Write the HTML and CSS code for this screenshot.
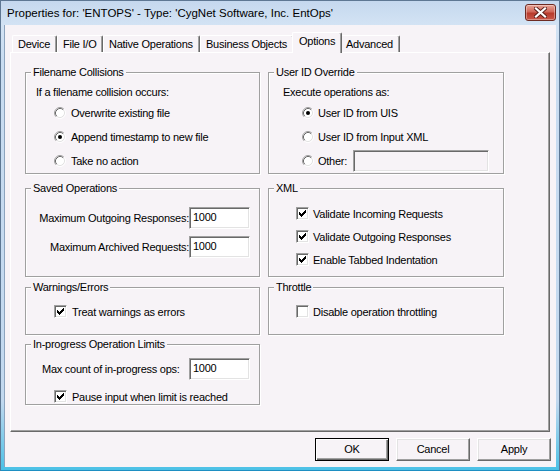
FILE: index.html
```html
<!DOCTYPE html>
<html>
<head>
<meta charset="utf-8">
<link rel="stylesheet" href="styles.css">
</head>
<body>
<div class="window">
  <div class="titlebar">
    <span class="title">Properties for: 'ENTOPS' - Type: 'CygNet Software, Inc. EntOps'</span>
    <span class="close">
      <svg width="13" height="11" viewBox="0 0 13 11"><path d="M2 1.5 L11 9.5 M11 1.5 L2 9.5" stroke="#5a1f1a" stroke-width="4" stroke-linecap="square"/><path d="M2 1.5 L11 9.5 M11 1.5 L2 9.5" stroke="#fff" stroke-width="2.2" stroke-linecap="square"/></svg>
    </span>
  </div>
  <div class="client">
    <div class="tabs">
      <div class="tab t-device">Device</div>
      <div class="tab t-file">File I/O</div>
      <div class="tab t-native">Native Operations</div>
      <div class="tab t-business">Business Objects</div>
      <div class="tab active t-options">Options</div>
      <div class="tab t-advanced">Advanced</div>
    </div>
    <div class="panel">
      <div class="col">
        <fieldset class="group g-file">
          <legend>Filename Collisions</legend>
          <div class="line lead-file">If a filename collision occurs:</div>
          <div class="options opts-file">
            <div class="opt"><span class="radio"><svg width="12" height="12" viewBox="0 0 12 12"><circle cx="6" cy="6" r="4.5" fill="#fff"/><path d="M2.11 9.89 A5.5 5.5 0 0 1 9.89 2.11" fill="none" stroke="#a0a0a0"/><path d="M9.89 2.11 A5.5 5.5 0 0 1 2.11 9.89" fill="none" stroke="#fff"/><path d="M2.82 9.18 A4.5 4.5 0 0 1 9.18 2.82" fill="none" stroke="#696969"/><path d="M9.18 2.82 A4.5 4.5 0 0 1 2.82 9.18" fill="none" stroke="#e3e3e3"/></svg></span>Overwrite existing file</div>
            <div class="opt"><span class="radio"><svg width="12" height="12" viewBox="0 0 12 12"><circle cx="6" cy="6" r="4.5" fill="#fff"/><path d="M2.11 9.89 A5.5 5.5 0 0 1 9.89 2.11" fill="none" stroke="#a0a0a0"/><path d="M9.89 2.11 A5.5 5.5 0 0 1 2.11 9.89" fill="none" stroke="#fff"/><path d="M2.82 9.18 A4.5 4.5 0 0 1 9.18 2.82" fill="none" stroke="#696969"/><path d="M9.18 2.82 A4.5 4.5 0 0 1 2.82 9.18" fill="none" stroke="#e3e3e3"/><circle cx="6" cy="6" r="2" fill="#000"/></svg></span>Append timestamp to new file</div>
            <div class="opt"><span class="radio"><svg width="12" height="12" viewBox="0 0 12 12"><circle cx="6" cy="6" r="4.5" fill="#fff"/><path d="M2.11 9.89 A5.5 5.5 0 0 1 9.89 2.11" fill="none" stroke="#a0a0a0"/><path d="M9.89 2.11 A5.5 5.5 0 0 1 2.11 9.89" fill="none" stroke="#fff"/><path d="M2.82 9.18 A4.5 4.5 0 0 1 9.18 2.82" fill="none" stroke="#696969"/><path d="M9.18 2.82 A4.5 4.5 0 0 1 2.82 9.18" fill="none" stroke="#e3e3e3"/></svg></span>Take no action</div>
          </div>
        </fieldset>
        <fieldset class="group g-saved">
          <legend>Saved Operations</legend>
          <div class="field-row"><span>Maximum Outgoing Responses:</span><span class="input num">1000</span></div>
          <div class="field-row second"><span>Maximum Archived Requests:</span><span class="input num">1000</span></div>
        </fieldset>
        <fieldset class="group g-warn">
          <legend>Warnings/Errors</legend>
          <div class="check-row cb-left"><span class="check"><svg width="9" height="9" viewBox="0 0 9 9"><path d="M1 3 V6 H2 V7 H3 V8 H4 V7 H5 V6 H6 V5 H7 V4 H8 V1 H7 V2 H6 V3 H5 V4 H4 V5 H3 V4 H2 V3 Z" fill="#000"/></svg></span>Treat warnings as errors</div>
        </fieldset>
        <fieldset class="group g-prog">
          <legend>In-progress Operation Limits</legend>
          <div class="count-row"><span>Max count of in-progress ops:</span><span class="input num">1000</span></div>
          <div class="check-row cb-left pause"><span class="check"><svg width="9" height="9" viewBox="0 0 9 9"><path d="M1 3 V6 H2 V7 H3 V8 H4 V7 H5 V6 H6 V5 H7 V4 H8 V1 H7 V2 H6 V3 H5 V4 H4 V5 H3 V4 H2 V3 Z" fill="#000"/></svg></span>Pause input when limit is reached</div>
        </fieldset>
      </div>
      <div class="col">
        <fieldset class="group g-user">
          <legend>User ID Override</legend>
          <div class="line lead-user">Execute operations as:</div>
          <div class="options opts-user">
            <div class="opt"><span class="radio"><svg width="12" height="12" viewBox="0 0 12 12"><circle cx="6" cy="6" r="4.5" fill="#fff"/><path d="M2.11 9.89 A5.5 5.5 0 0 1 9.89 2.11" fill="none" stroke="#a0a0a0"/><path d="M9.89 2.11 A5.5 5.5 0 0 1 2.11 9.89" fill="none" stroke="#fff"/><path d="M2.82 9.18 A4.5 4.5 0 0 1 9.18 2.82" fill="none" stroke="#696969"/><path d="M9.18 2.82 A4.5 4.5 0 0 1 2.82 9.18" fill="none" stroke="#e3e3e3"/><circle cx="6" cy="6" r="2" fill="#000"/></svg></span>User ID from UIS</div>
            <div class="opt"><span class="radio"><svg width="12" height="12" viewBox="0 0 12 12"><circle cx="6" cy="6" r="4.5" fill="#fff"/><path d="M2.11 9.89 A5.5 5.5 0 0 1 9.89 2.11" fill="none" stroke="#a0a0a0"/><path d="M9.89 2.11 A5.5 5.5 0 0 1 2.11 9.89" fill="none" stroke="#fff"/><path d="M2.82 9.18 A4.5 4.5 0 0 1 9.18 2.82" fill="none" stroke="#696969"/><path d="M9.18 2.82 A4.5 4.5 0 0 1 2.82 9.18" fill="none" stroke="#e3e3e3"/></svg></span>User ID from Input XML</div>
            <div class="opt"><span class="radio"><svg width="12" height="12" viewBox="0 0 12 12"><circle cx="6" cy="6" r="4.5" fill="#fff"/><path d="M2.11 9.89 A5.5 5.5 0 0 1 9.89 2.11" fill="none" stroke="#a0a0a0"/><path d="M9.89 2.11 A5.5 5.5 0 0 1 2.11 9.89" fill="none" stroke="#fff"/><path d="M2.82 9.18 A4.5 4.5 0 0 1 9.18 2.82" fill="none" stroke="#696969"/><path d="M9.18 2.82 A4.5 4.5 0 0 1 2.82 9.18" fill="none" stroke="#e3e3e3"/></svg></span>Other:<span class="input other"></span></div>
          </div>
        </fieldset>
        <fieldset class="group g-xml">
          <legend>XML</legend>
          <div class="check-row cb-right"><span class="check"><svg width="9" height="9" viewBox="0 0 9 9"><path d="M1 3 V6 H2 V7 H3 V8 H4 V7 H5 V6 H6 V5 H7 V4 H8 V1 H7 V2 H6 V3 H5 V4 H4 V5 H3 V4 H2 V3 Z" fill="#000"/></svg></span>Validate Incoming Requests</div>
          <div class="check-row cb-right"><span class="check"><svg width="9" height="9" viewBox="0 0 9 9"><path d="M1 3 V6 H2 V7 H3 V8 H4 V7 H5 V6 H6 V5 H7 V4 H8 V1 H7 V2 H6 V3 H5 V4 H4 V5 H3 V4 H2 V3 Z" fill="#000"/></svg></span>Validate Outgoing Responses</div>
          <div class="check-row cb-right"><span class="check"><svg width="9" height="9" viewBox="0 0 9 9"><path d="M1 3 V6 H2 V7 H3 V8 H4 V7 H5 V6 H6 V5 H7 V4 H8 V1 H7 V2 H6 V3 H5 V4 H4 V5 H3 V4 H2 V3 Z" fill="#000"/></svg></span>Enable Tabbed Indentation</div>
        </fieldset>
        <fieldset class="group g-throttle">
          <legend>Throttle</legend>
          <div class="check-row cb-right"><span class="check"></span>Disable operation throttling</div>
        </fieldset>
      </div>
    </div>
    <div class="buttons">
      <div class="btn default">OK</div>
      <div class="btn">Cancel</div>
      <div class="btn">Apply</div>
    </div>
  </div>
</div>
</body>
</html>
```

FILE: styles.css
```css
* { box-sizing: border-box; }
html, body { margin: 0; padding: 0; background: #f7f3f7; }
body { width: 560px; height: 471px; overflow: hidden; font-family: "Liberation Sans", Arial, sans-serif; font-size: 11px; letter-spacing: -0.25px; color: #000; }

.window {
  width: 560px; height: 471px;
  border: 1px solid #5e7793;
  border-bottom-color: #1e8fc2;
  background: linear-gradient(#c5d8ee 0px, #d3e3f4 24px, #c9dcf1 60px, #c2d8ef 400px, #48c0e6 471px);
  display: flex; flex-direction: column;
}
.titlebar { height: 24px; display: flex; align-items: flex-start; flex: none; }
.title { padding-left: 6px; line-height: 25px; font-size: 11.5px; letter-spacing: 0; color: #000; white-space: nowrap; }
.close {
  margin-left: auto; margin-right: 3px; margin-top: 3px;
  width: 31px; height: 17px; border-radius: 3px;
  border: 1px solid #6d2a22;
  background: linear-gradient(#e8a496 0%, #d0685a 45%, #b83b2c 55%, #c9584a 100%);
  display: flex; align-items: center; justify-content: center;
  box-shadow: inset 0 0 0 1px rgba(255,255,255,0.35);
}
.client {
  flex: 1; margin: 0 3px 3px 3px;
  background: #f7f3f7;
  border-left: 1px solid #8da4be;
  display: flex; flex-direction: column;
}

.tabs { display: flex; align-items: flex-end; height: 20px; margin-top: 7px; margin-left: 7px; position: relative; z-index: 1; }
.tab {
  height: 17px; padding: 0 0 0 5px; line-height: 16px;
  border-top: 1px solid #fff; border-left: 1px solid #fff; border-right: 1px solid #696969;
  border-radius: 2px 2px 0 0;
  box-shadow: inset -1px 0 #a0a0a0;
  background: #f7f3f7; white-space: nowrap;
}
.t-device { width: 45px; }
.t-file { width: 46px; }
.t-native { width: 97px; }
.t-business { width: 94px; }
.t-options { width: 50px; }
.t-advanced { width: 60px; }
.tab.active { height: 21px; margin: 0 -2px -1px -2px; line-height: 17px; padding-left: 6px; padding-bottom: 3px; z-index: 2; position: relative; }

.panel {
  margin-left: 5px; width: 540px; height: 380px;
  border-top: 1px solid #fff; border-left: 1px solid #fff;
  border-right: 1px solid #696969; border-bottom: 1px solid #696969;
  box-shadow: inset -1px -1px #a0a0a0;
  padding: 13px 0 0 14px;
  display: flex; gap: 8px; align-items: flex-start;
}
.col { display: flex; flex-direction: column; }
.col:first-child { width: 235px; }
.col:last-child { width: 236px; }

.group {
  margin: 0; padding: 0; min-width: 0;
  border: 1px solid #a0a0a0;
  box-shadow: 1px 1px 0 #fff, inset 1px 1px 0 #fff;
  display: flex; flex-direction: column;
}
.group legend {
  margin-left: 5px; padding: 0 2px; line-height: 13px; height: 13px;
  background: #f7f3f7;
}
.g-file, .g-user { height: 108px; }
.g-saved, .g-xml { height: 95px; margin-top: 8px; }
.g-warn, .g-throttle { height: 54px; margin-top: 4px; }
.g-prog { height: 67px; margin-top: 3px; }

.line { line-height: 13px; height: 13px; }
.lead-file { margin-top: 7px; padding-left: 10px; }
.lead-user { margin-top: 7px; padding-left: 14px; }
.options { display: flex; flex-direction: column; }
.opts-file { margin-top: 2px; padding-left: 28px; }
.opts-user { margin-top: 2px; padding-left: 33px; }
.opt { height: 24px; display: flex; align-items: center; white-space: nowrap; }
.radio { width: 12px; height: 12px; margin-right: 5px; display: flex; }
.opts-user .radio { margin-right: 4px; }
.input {
  background: #fff;
  border-top: 1px solid #a0a0a0; border-left: 1px solid #a0a0a0;
  border-bottom: 1px solid #fff; border-right: 1px solid #fff;
  box-shadow: inset 1px 1px #696969, inset -1px -1px #e3e3e3;
}
.input.num { width: 61px; height: 22px; padding: 3px 0 0 3px; line-height: 13px; }
.input.other { width: 136px; height: 22px; margin-left: 6px; background: #f7f3f7; }

.field-row { display: flex; justify-content: flex-end; align-items: center; padding-right: 9px; margin-top: 12px; white-space: nowrap; }
.field-row.second { margin-top: 7px; }
.count-row { display: flex; align-items: center; padding: 0 9px 0 16px; margin-top: 7px; white-space: nowrap; }
.count-row .input { margin-left: auto; }

.check-row { height: 23px; display: flex; align-items: center; white-space: nowrap; }
.cb-left { padding-left: 28px; }
.cb-right { padding-left: 27px; }
.g-xml .check-row:first-of-type { margin-top: 7px; }
.g-warn .check-row, .g-throttle .check-row { margin-top: 6px; }
.check-row.pause { margin-top: 5px; }
.check {
  width: 13px; height: 13px; margin-right: 5px; flex: none;
  background: #fff;
  border-top: 1px solid #a0a0a0; border-left: 1px solid #a0a0a0;
  border-bottom: 1px solid #fff; border-right: 1px solid #fff;
  box-shadow: inset 1px 1px #696969, inset -1px -1px #e3e3e3;
  padding: 1px; display: flex;
}
.cb-right .check { margin-right: 4px; }

.buttons { display: flex; justify-content: flex-end; gap: 7px; margin-top: 6px; width: 546px; }
.btn {
  width: 74px; height: 23px; text-align: center; line-height: 21px;
  border-top: 1px solid #fff; border-left: 1px solid #fff;
  border-right: 1px solid #696969; border-bottom: 1px solid #696969;
  box-shadow: inset -1px -1px #a0a0a0, inset 1px 1px #e3e3e3;
  background: #f7f3f7;
}
.btn.default { border: 1px solid #000; box-shadow: inset 1px 1px #fff, inset -1px -1px #696969, inset -2px -2px #a0a0a0; }
```
